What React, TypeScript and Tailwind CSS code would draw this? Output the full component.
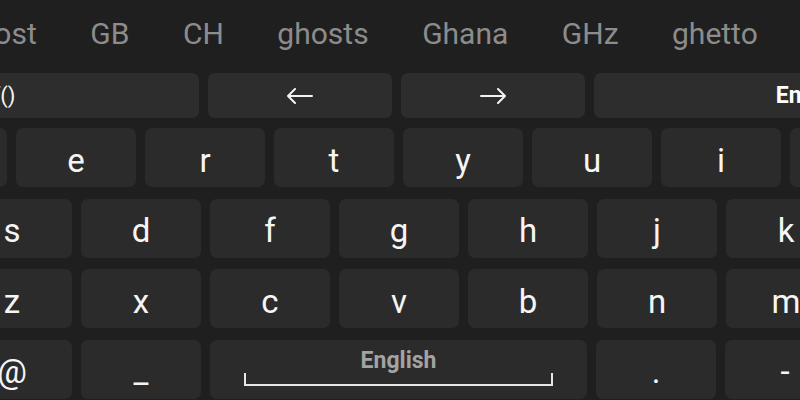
import React from "react";

const font = { fontFamily: "Roboto, 'Noto Sans', sans-serif" };

const SUGGESTIONS = ["ghost", "GB", "CH", "ghosts", "Ghana", "GHz", "ghetto"];
const ROW1 = ["q", "w", "e", "r", "t", "y", "u", "i", "o", "p"];
const ROW2 = ["a", "s", "d", "f", "g", "h", "j", "k", "l"];
const ROW3 = ["⇧", "z", "x", "c", "v", "b", "n", "m", "⌫"];

function Arrow({ dir }: { dir: "left" | "right" }) {
  return (
    <svg width="28" height="16" viewBox="0 0 28 16" fill="none" stroke="#f2f2f2" strokeWidth="2" strokeLinecap="round" strokeLinejoin="round">
      {dir === "left" ? <path d="M26 8H2M9 1L2 8l7 7" /> : <path d="M2 8h24M19 1l7 7-7 7" />}
    </svg>
  );
}

function Key({ children, className = "" }: { children?: React.ReactNode; className?: string }) {
  return (
    <div className={`flex h-[59px] w-[120px] shrink-0 items-center justify-center rounded-[7px] bg-[#2b2b2b] pt-[5px] text-[33px] leading-none text-[#f5f5f5] ${className}`}>
      {children}
    </div>
  );
}

export default function App() {
  return (
    <div className="h-[400px] w-[800px] overflow-hidden bg-[#1f1f1f]" style={font}>
      {/* suggestion strip */}
      <div className="flex h-[70px] items-center gap-[53.5px] whitespace-nowrap pb-[3px] text-[30px] leading-none text-[#8c8c8c]">
        {SUGGESTIONS.map((s, i) => (
          <span key={s} className={i === 0 ? "ml-[-39px]" : ""}>
            {s}
          </span>
        ))}
      </div>

      {/* function row */}
      <div className="ml-[-205px] mt-[3px] flex gap-[9px]">
        <div className="flex h-[45px] w-[404px] shrink-0 items-center justify-center rounded-[7px] bg-[#2d2d2d] pl-[14px] text-[22px] leading-none text-[#f5f5f5]">
          f()
        </div>
        <div className="flex h-[45px] w-[184px] shrink-0 items-center justify-center rounded-[7px] bg-[#2d2d2d]">
          <Arrow dir="left" />
        </div>
        <div className="flex h-[45px] w-[184px] shrink-0 items-center justify-center rounded-[7px] bg-[#2d2d2d]">
          <Arrow dir="right" />
        </div>
        <div className="flex h-[45px] w-[404px] shrink-0 items-center justify-center rounded-[7px] bg-[#2d2d2d] pl-[14px] text-[23px] font-bold leading-none text-white">
          Enter
        </div>
      </div>

      <div className="mt-[10px] flex flex-col gap-[11.5px]">
        <div className="ml-[-242px] flex gap-[9px]">
          {ROW1.map((k) => (
            <Key key={k}>{k}</Key>
          ))}
        </div>
        <div className="ml-[-177px] flex gap-[9px]">
          {ROW2.map((k) => (
            <Key key={k}>{k}</Key>
          ))}
        </div>
        <div className="ml-[-177px] flex gap-[9px]">
          {ROW3.map((k) => (
            <Key key={k}>{k}</Key>
          ))}
        </div>
        <div className="ml-[-177px] flex gap-[9px]">
          <Key className="text-[22px]">?123</Key>
          <Key>@</Key>
          <Key>_</Key>
          <div className="flex h-[59px] w-[377px] shrink-0 flex-col items-center rounded-[7px] bg-[#2b2b2b] pt-[9px]">
            <span className="text-[23px] font-bold leading-none text-[#a3a3a3]">English</span>
            <div className="mt-[1px] h-[13px] w-[309px] border-x-2 border-b-2 border-[#e6e6e6]" />
          </div>
          <Key>.</Key>
          <Key>-</Key>
          <Key>☺</Key>
        </div>
      </div>
    </div>
  );
}
